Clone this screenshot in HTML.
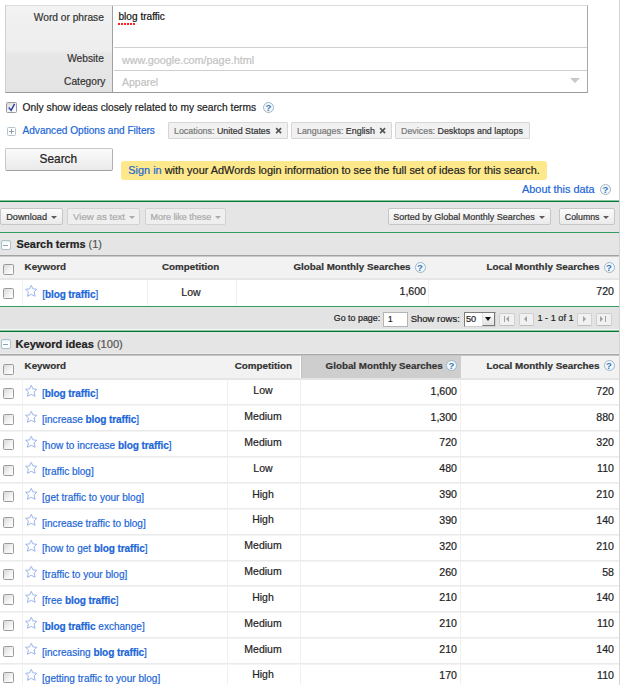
<!DOCTYPE html>
<html><head><meta charset="utf-8">
<style>
*{box-sizing:border-box;margin:0;padding:0}
html,body{width:620px;height:685px;overflow:hidden;background:#fff}
body{position:relative;font-family:"Liberation Sans",sans-serif;color:#222;-webkit-text-stroke:0.2px currentColor}
.a{position:absolute;white-space:nowrap}
.t{position:absolute;white-space:nowrap;line-height:1}
.rline{position:absolute;left:619px;top:0;width:1px;height:685px;background:#d4d4d4}
/* form */
#form{position:absolute;left:5px;top:5px;width:583px;height:88px;border:1px solid #cfcfcf;border-top-color:#dcdcdc;border-bottom-color:#9a9a9a;border-right-color:#a8a8a8;background:#fff}
#lab{position:absolute;left:0;top:0;width:107px;height:86px;background:linear-gradient(#f3f3f3 0px,#f0f0f0 14px,#eeeeee 44px,#e7e7e7 48px,#e4e4e4 86px);border-right:1px solid #a0a0a0}
.hl{position:absolute;height:1px;background:#cfcfcf}
.cb{position:absolute;width:11px;height:11px;border:1px solid #9a9a9a;border-radius:1.5px;background:linear-gradient(135deg,#d6d9dd,#f4f4f4 60%,#fff)}
.help{position:absolute;width:11px;height:11px;border:1px solid #9db6c6;border-radius:50%;background:#f2f8fc;color:#3a76b8;font-size:9.5px;font-weight:bold;line-height:9.5px;text-align:center;-webkit-text-stroke:0}
.chip{position:absolute;height:17px;top:122px;border:1px solid #d6d6d6;background:#f1f1f1;border-radius:1px;font-size:8.9px;line-height:16.5px;color:#777;padding-left:5px}
.chip b{font-weight:normal;color:#333}
.chip i{font-style:normal;color:#444;font-weight:bold;position:absolute;font-size:10px}
.btn{position:absolute;border:1px solid #c6c6c6;border-radius:2px;background:linear-gradient(#fbfbfb,#eaeaea);color:#333}
.arr{position:absolute;width:0;height:0;border-left:3px solid transparent;border-right:3px solid transparent;border-top:3.5px solid #5c5c5c}
.green{position:absolute;left:0;width:619px;height:1px;background:#067a33}
.green2{position:absolute;left:0;width:619px;height:1px;background:#8cc5a3}
.bar{position:absolute;left:0;width:619px;background:#e5e5e5}
.minus{position:absolute;width:10px;height:10px;border:1px solid #a9c2cc;border-radius:2px;background:linear-gradient(#e6f0f2,#fff 40%,#fff)}
.minus:after{content:"";position:absolute;left:1.2px;top:4px;width:5px;height:1px;background:#8aa3b3}
.star{position:absolute}
.vd{position:absolute;width:1px;background:#f0f0f0}
.hd{position:absolute;height:1px;background:#e4e4e4}
.hb{font-weight:bold;color:#333;font-size:9.8px}
.kw{color:#1b66d8;font-size:10.05px}
.kw b{font-weight:bold;letter-spacing:-0.1px}
.num{font-size:10.6px;color:#222;text-align:right}
.cmp{font-size:10.5px;color:#222;text-align:center}
.row{position:absolute;left:0;width:619px;height:25.84px;border-bottom:1px solid #ebebeb;box-shadow:0 1px 0 #f3f3f3}
.pbtn{position:absolute;top:312.5px;width:15.5px;height:13px;border:1px solid #cfcfcf;border-bottom-color:#bdbdbd;background:#f1f1f1;border-radius:2px}
</style></head><body>
<div class="rline"></div>

<!-- search form -->
<div id="form">
  <div id="lab"></div>
  <div class="hl" style="left:108px;top:41px;width:473px"></div>
  <div class="hl" style="left:108px;top:64px;width:473px"></div>
</div>
<div class="t" style="left:33.8px;top:13px;font-size:10.2px;color:#333">Word or phrase</div>
<div class="t" style="left:67.2px;top:53.5px;font-size:10.2px;color:#333">Website</div>
<div class="t" style="left:64.1px;top:76.5px;font-size:10.2px;color:#333">Category</div>
<div class="t" style="left:118.5px;top:11.5px;font-size:10.1px;color:#111">blog traffic</div>
<div class="a" style="left:118px;top:23px;width:17px;height:2px;background:repeating-linear-gradient(90deg,#f22 0,#f22 2px,transparent 2px,transparent 3px)"></div>
<div class="t" style="left:122px;top:55px;font-size:10.8px;color:#c2c2c2">www.google.com/page.html</div>
<div class="t" style="left:122px;top:77px;font-size:10.5px;color:#c2c2c2">Apparel</div>
<div class="arr" style="left:569.5px;top:78px;border-left-width:5.5px;border-right-width:5.5px;border-top:5.5px solid #c8c8c8"></div>

<!-- checkbox row -->
<div class="cb" style="left:6px;top:102px"></div>
<svg class="a" style="left:7px;top:102px" width="10" height="10" viewBox="0 0 10 10"><path d="M1.8 5.6 L4.1 8.4 L7.6 1.8" stroke="#3445a6" stroke-width="1.5" fill="none"/></svg>
<div class="t" style="left:22.6px;top:103px;font-size:10.26px;color:#222">Only show ideas closely related to my search terms</div>
<div class="help" style="left:263px;top:101.8px">?</div>

<!-- advanced -->
<div class="a" style="left:7px;top:127px;width:9px;height:9px;border:1px solid #b3c4ce;border-radius:1.5px;background:#fff"></div>
<div class="a" style="left:9px;top:131px;width:5px;height:1px;background:#8b9fae"></div>
<div class="a" style="left:11px;top:129px;width:1px;height:5px;background:#8b9fae"></div>
<div class="t" style="left:22.5px;top:126.3px;font-size:10.1px;color:#1b66d8">Advanced Options and Filters</div>
<div class="chip" style="left:168px;width:120px">Locations: <b>United States</b></div><svg class="a" style="left:274.2px;top:125.8px" width="9" height="9" viewBox="0 0 9 9"><path d="M2.1 2.1L7.1 7.1M7.1 2.1L2.1 7.1" stroke="#555" stroke-width="1.6"/></svg>
<div class="chip" style="left:291px;width:101px">Languages: <b>English</b></div><svg class="a" style="left:378.4px;top:125.8px" width="9" height="9" viewBox="0 0 9 9"><path d="M2.1 2.1L7.1 7.1M7.1 2.1L2.1 7.1" stroke="#555" stroke-width="1.6"/></svg>
<div class="chip" style="left:395px;width:135px">Devices: <b>Desktops and laptops</b></div>

<!-- search button -->
<div class="btn" style="left:5px;top:148px;width:108px;height:22.5px;border-color:#c8c8c8 #b0b0b0 #a0a0a0 #c8c8c8"></div>
<div class="t" style="left:39.5px;top:154.4px;font-size:11.9px;color:#222">Search</div>

<!-- banner -->
<div class="a" style="left:121px;top:161px;width:426px;height:19px;background:#fde98c;border-radius:3px"></div>
<div class="t" style="left:128.3px;top:165px;font-size:10.92px;color:#222"><span style="color:#2466d2">Sign in</span> with your AdWords login information to see the full set of ideas for this search.</div>
<div class="t" style="left:522px;top:184px;font-size:10.9px;color:#1b66d8">About this data</div>
<div class="help" style="left:600px;top:184px">?</div>

<!-- toolbar -->
<div class="green2" style="top:200px"></div>
<div class="green" style="top:201px"></div>
<div class="bar" style="top:202px;height:30px"></div>
<div class="green" style="top:232px;background:#349b61"></div>
<div class="btn" style="left:0px;top:208px;width:63px;height:17px"></div>
<div class="t" style="left:6.2px;top:212.5px;font-size:9.2px;color:#333">Download</div>
<div class="arr" style="left:51.3px;top:215.5px"></div>
<div class="btn" style="left:67px;top:208px;width:73px;height:17px;background:#efefef;border-color:#d2d2d2"></div>
<div class="t" style="left:73px;top:211.8px;font-size:9.7px;color:#aaa">View as text</div>
<div class="arr" style="left:129.2px;top:215.5px;border-top-color:#aaa"></div>
<div class="btn" style="left:145px;top:208px;width:81px;height:17px;background:#efefef;border-color:#d2d2d2"></div>
<div class="t" style="left:150.5px;top:212.5px;font-size:8.96px;color:#aaa">More like these</div>
<div class="arr" style="left:214.5px;top:215.5px;border-top-color:#aaa"></div>
<div class="btn" style="left:388px;top:208px;width:163px;height:17px"></div>
<div class="t" style="left:393.2px;top:212.5px;font-size:9px;color:#333">Sorted by Global Monthly Searches</div>
<div class="arr" style="left:538.7px;top:215.5px"></div>
<div class="btn" style="left:559px;top:208px;width:56px;height:17px"></div>
<div class="t" style="left:564.8px;top:212.5px;font-size:8.8px;color:#333">Columns</div>
<div class="arr" style="left:602.7px;top:215.5px"></div>

<!-- search terms section -->
<div class="bar" style="top:233px;height:22px"></div>
<div class="minus" style="left:1px;top:240px"></div>
<div class="t" style="left:16.5px;top:239.2px;font-size:10.9px;color:#222"><b>Search terms</b> <span style="color:#555">(1)</span></div>
<div class="a" style="left:0;top:255px;width:619px;height:1px;background:#a2a2a2"></div>
<div class="a" style="left:0;top:256px;width:619px;height:23px;background:#f2f2f2;border-top:1px solid #cacaca"></div>
<div class="hd" style="left:0;top:278px;width:619px;height:2px;background:#e6e6e6"></div>
<div class="cb" style="left:3px;top:264px"></div>
<div class="t hb" style="left:24.6px;top:261.8px">Keyword</div>
<div class="t hb" style="left:162px;top:261.8px">Competition</div>
<div class="t hb" style="left:293.5px;top:261.8px">Global Monthly Searches</div>
<div class="help" style="left:414.5px;top:261.5px">?</div>
<div class="t hb" style="left:486.5px;top:261.8px;font-size:9.9px">Local Monthly Searches</div>
<div class="help" style="left:603.5px;top:261.5px">?</div>
<div class="vd" style="left:22px;top:280px;height:26px"></div>
<div class="vd" style="left:147px;top:280px;height:26px"></div>
<div class="vd" style="left:236px;top:280px;height:26px"></div>
<div class="vd" style="left:428px;top:280px;height:26px"></div>
<div class="cb" style="left:3px;top:288px"></div>
<svg class="star" style="left:22px;top:282px" width="18" height="18" viewBox="0 0 18 18"><path d="M9.25 3.3 L10.9 6.9 L14.9 7.3 L12.1 9.9 L13.1 14.3 L9.25 12.3 L5.4 14.3 L6.4 9.9 L3.6 7.3 L7.6 6.9 Z" fill="none" stroke="#9cb6ec" stroke-width="1" stroke-linejoin="round"/></svg>
<div class="t kw" style="left:42.2px;top:289.5px;font-size:10px">[<b>blog traffic</b>]</div>
<div class="t cmp" style="left:147px;width:88px;top:286.5px">Low</div>
<div class="t num" style="left:237px;width:189px;top:286.3px">1,600</div>
<div class="t num" style="left:420px;width:194px;top:286.3px">720</div>

<!-- pager -->
<div class="green" style="top:306px;background:#349b61"></div>
<div class="bar" style="top:307px;height:23px;background:#e3e3e3"></div>
<div class="a" style="left:0;top:329px;width:619px;height:1px;background:#f6f6f6"></div>
<div class="green2" style="top:330px"></div>
<div class="green" style="top:331px"></div>
<div class="t" style="left:333.8px;top:314px;font-size:8.9px;color:#222">Go to page:</div>
<div class="a" style="left:383px;top:311.5px;width:25px;height:15px;background:#fff;border:1px solid #b4b4b4;font-size:8.3px;line-height:13px;padding-left:4px;color:#222">1</div>
<div class="t" style="left:410.7px;top:314px;font-size:9.5px;color:#222">Show rows:</div>
<div class="a" style="left:463.5px;top:311.5px;width:32px;height:15px;background:#fff;border:1px solid #d0d0d0;border-left-color:#7c7c7c;border-top-color:#7c7c7c;font-size:9.2px;line-height:12.5px;padding-left:1.5px;color:#222">50</div>
<div class="a" style="left:481.5px;top:312.5px;width:13px;height:13px;background:linear-gradient(#fbfbfb,#e2e2e2);border-left:1px solid #e4e4e4;border-right:1px solid #7a7a7a;border-bottom:1px solid #7a7a7a"></div>
<div class="arr" style="left:485px;top:317px;border-left-width:3.5px;border-right-width:3.5px;border-top:4px solid #111"></div>
<div class="pbtn" style="left:499px"></div>
<div class="a" style="left:503.5px;top:316px;width:1.3px;height:6px;background:#a0a0a0"></div>
<div class="a" style="left:506.3px;top:316px;width:0;height:0;border-top:3px solid transparent;border-bottom:3px solid transparent;border-right:3.5px solid #a0a0a0"></div>
<div class="pbtn" style="left:518.5px"></div>
<div class="a" style="left:523.5px;top:316px;width:0;height:0;border-top:3px solid transparent;border-bottom:3px solid transparent;border-right:3.5px solid #a0a0a0"></div>
<div class="t" style="left:537.4px;top:314px;font-size:9.2px;color:#222">1 - 1 of 1</div>
<div class="pbtn" style="left:576.5px"></div>
<div class="a" style="left:583px;top:316px;width:0;height:0;border-top:3px solid transparent;border-bottom:3px solid transparent;border-left:3.5px solid #a0a0a0"></div>
<div class="pbtn" style="left:596px"></div>
<div class="a" style="left:600px;top:316px;width:0;height:0;border-top:3px solid transparent;border-bottom:3px solid transparent;border-left:3.5px solid #a0a0a0"></div>
<div class="a" style="left:605px;top:316px;width:1.3px;height:6px;background:#a0a0a0"></div>

<!-- keyword ideas section -->
<div class="bar" style="top:332px;height:22px"></div>
<div class="minus" style="left:1px;top:339px"></div>
<div class="t" style="left:15.5px;top:338.7px;font-size:11.1px;color:#222"><b>Keyword ideas</b> <span style="color:#555">(100)</span></div>
<div class="a" style="left:0;top:353px;width:619px;height:1px;background:#efefef"></div>
<div class="a" style="left:0;top:354px;width:619px;height:1px;background:#a6a6a6"></div>
<div class="a" style="left:0;top:355px;width:619px;height:1px;background:#c6c6c6"></div>
<div class="a" style="left:0;top:356px;width:619px;height:23px;background:#f2f2f2"></div>
<div class="a" style="left:300px;top:356px;width:1px;height:23px;background:#fff"></div>
<div class="a" style="left:301px;top:356px;width:160px;height:23px;background:#cecece;border-left:1px solid #c2c2c2"></div>
<div class="hd" style="left:0;top:378px;width:619px;height:2px;background:#e5e5e5"></div>
<div class="cb" style="left:3px;top:363.5px"></div>
<div class="t hb" style="left:24.6px;top:361px">Keyword</div>
<div class="t hb" style="left:234.8px;top:361px">Competition</div>
<div class="t hb" style="left:325.6px;top:361px">Global Monthly Searches</div>
<div class="help" style="left:446px;top:360px">?</div>
<div class="t hb" style="left:486.5px;top:361px;font-size:9.9px">Local Monthly Searches</div>
<div class="help" style="left:603.5px;top:360px">?</div>

<div class="vd" style="left:22px;top:379px;height:306px"></div>
<div class="vd" style="left:227px;top:379px;height:306px"></div>
<div class="vd" style="left:300px;top:379px;height:306px"></div>
<div class="vd" style="left:460px;top:379px;height:306px"></div>
<div id="rows"><div class="row" style="top:379.66px"><div class="cb" style="left:3px;top:8px"></div><svg class="star" style="left:22px;top:2px" width="18" height="18" viewBox="0 0 18 18"><path d="M9.25 3.3 L10.9 6.9 L14.9 7.3 L12.1 9.9 L13.1 14.3 L9.25 12.3 L5.4 14.3 L6.4 9.9 L3.6 7.3 L7.6 6.9 Z" fill="none" stroke="#9cb6ec" stroke-width="1" stroke-linejoin="round"/></svg><div class="t kw" style="left:42px;top:9.8px">[<b>blog traffic</b>]</div><div class="t cmp" style="left:226.5px;width:73px;top:5.5px">Low</div><div class="t num" style="left:301px;width:156px;top:6px">1,600</div><div class="t num" style="left:461px;width:153px;top:6px">720</div></div>
<div class="row" style="top:405.50px"><div class="cb" style="left:3px;top:8px"></div><svg class="star" style="left:22px;top:2px" width="18" height="18" viewBox="0 0 18 18"><path d="M9.25 3.3 L10.9 6.9 L14.9 7.3 L12.1 9.9 L13.1 14.3 L9.25 12.3 L5.4 14.3 L6.4 9.9 L3.6 7.3 L7.6 6.9 Z" fill="none" stroke="#9cb6ec" stroke-width="1" stroke-linejoin="round"/></svg><div class="t kw" style="left:42px;top:9.8px">[increase <b>blog traffic</b>]</div><div class="t cmp" style="left:226.5px;width:73px;top:5.5px">Medium</div><div class="t num" style="left:301px;width:156px;top:6px">1,300</div><div class="t num" style="left:461px;width:153px;top:6px">880</div></div>
<div class="row" style="top:431.34px"><div class="cb" style="left:3px;top:8px"></div><svg class="star" style="left:22px;top:2px" width="18" height="18" viewBox="0 0 18 18"><path d="M9.25 3.3 L10.9 6.9 L14.9 7.3 L12.1 9.9 L13.1 14.3 L9.25 12.3 L5.4 14.3 L6.4 9.9 L3.6 7.3 L7.6 6.9 Z" fill="none" stroke="#9cb6ec" stroke-width="1" stroke-linejoin="round"/></svg><div class="t kw" style="left:42px;top:9.8px">[how to increase <b>blog traffic</b>]</div><div class="t cmp" style="left:226.5px;width:73px;top:5.5px">Medium</div><div class="t num" style="left:301px;width:156px;top:6px">720</div><div class="t num" style="left:461px;width:153px;top:6px">320</div></div>
<div class="row" style="top:457.18px"><div class="cb" style="left:3px;top:8px"></div><svg class="star" style="left:22px;top:2px" width="18" height="18" viewBox="0 0 18 18"><path d="M9.25 3.3 L10.9 6.9 L14.9 7.3 L12.1 9.9 L13.1 14.3 L9.25 12.3 L5.4 14.3 L6.4 9.9 L3.6 7.3 L7.6 6.9 Z" fill="none" stroke="#9cb6ec" stroke-width="1" stroke-linejoin="round"/></svg><div class="t kw" style="left:42px;top:9.8px">[traffic blog]</div><div class="t cmp" style="left:226.5px;width:73px;top:5.5px">Low</div><div class="t num" style="left:301px;width:156px;top:6px">480</div><div class="t num" style="left:461px;width:153px;top:6px">110</div></div>
<div class="row" style="top:483.02px"><div class="cb" style="left:3px;top:8px"></div><svg class="star" style="left:22px;top:2px" width="18" height="18" viewBox="0 0 18 18"><path d="M9.25 3.3 L10.9 6.9 L14.9 7.3 L12.1 9.9 L13.1 14.3 L9.25 12.3 L5.4 14.3 L6.4 9.9 L3.6 7.3 L7.6 6.9 Z" fill="none" stroke="#9cb6ec" stroke-width="1" stroke-linejoin="round"/></svg><div class="t kw" style="left:42px;top:9.8px">[get traffic to your blog]</div><div class="t cmp" style="left:226.5px;width:73px;top:5.5px">High</div><div class="t num" style="left:301px;width:156px;top:6px">390</div><div class="t num" style="left:461px;width:153px;top:6px">210</div></div>
<div class="row" style="top:508.86px"><div class="cb" style="left:3px;top:8px"></div><svg class="star" style="left:22px;top:2px" width="18" height="18" viewBox="0 0 18 18"><path d="M9.25 3.3 L10.9 6.9 L14.9 7.3 L12.1 9.9 L13.1 14.3 L9.25 12.3 L5.4 14.3 L6.4 9.9 L3.6 7.3 L7.6 6.9 Z" fill="none" stroke="#9cb6ec" stroke-width="1" stroke-linejoin="round"/></svg><div class="t kw" style="left:42px;top:9.8px">[increase traffic to blog]</div><div class="t cmp" style="left:226.5px;width:73px;top:5.5px">High</div><div class="t num" style="left:301px;width:156px;top:6px">390</div><div class="t num" style="left:461px;width:153px;top:6px">140</div></div>
<div class="row" style="top:534.70px"><div class="cb" style="left:3px;top:8px"></div><svg class="star" style="left:22px;top:2px" width="18" height="18" viewBox="0 0 18 18"><path d="M9.25 3.3 L10.9 6.9 L14.9 7.3 L12.1 9.9 L13.1 14.3 L9.25 12.3 L5.4 14.3 L6.4 9.9 L3.6 7.3 L7.6 6.9 Z" fill="none" stroke="#9cb6ec" stroke-width="1" stroke-linejoin="round"/></svg><div class="t kw" style="left:42px;top:9.8px">[how to get <b>blog traffic</b>]</div><div class="t cmp" style="left:226.5px;width:73px;top:5.5px">Medium</div><div class="t num" style="left:301px;width:156px;top:6px">320</div><div class="t num" style="left:461px;width:153px;top:6px">210</div></div>
<div class="row" style="top:560.54px"><div class="cb" style="left:3px;top:8px"></div><svg class="star" style="left:22px;top:2px" width="18" height="18" viewBox="0 0 18 18"><path d="M9.25 3.3 L10.9 6.9 L14.9 7.3 L12.1 9.9 L13.1 14.3 L9.25 12.3 L5.4 14.3 L6.4 9.9 L3.6 7.3 L7.6 6.9 Z" fill="none" stroke="#9cb6ec" stroke-width="1" stroke-linejoin="round"/></svg><div class="t kw" style="left:42px;top:9.8px">[traffic to your blog]</div><div class="t cmp" style="left:226.5px;width:73px;top:5.5px">Medium</div><div class="t num" style="left:301px;width:156px;top:6px">260</div><div class="t num" style="left:461px;width:153px;top:6px">58</div></div>
<div class="row" style="top:586.38px"><div class="cb" style="left:3px;top:8px"></div><svg class="star" style="left:22px;top:2px" width="18" height="18" viewBox="0 0 18 18"><path d="M9.25 3.3 L10.9 6.9 L14.9 7.3 L12.1 9.9 L13.1 14.3 L9.25 12.3 L5.4 14.3 L6.4 9.9 L3.6 7.3 L7.6 6.9 Z" fill="none" stroke="#9cb6ec" stroke-width="1" stroke-linejoin="round"/></svg><div class="t kw" style="left:42px;top:9.8px">[free <b>blog traffic</b>]</div><div class="t cmp" style="left:226.5px;width:73px;top:5.5px">High</div><div class="t num" style="left:301px;width:156px;top:6px">210</div><div class="t num" style="left:461px;width:153px;top:6px">140</div></div>
<div class="row" style="top:612.22px"><div class="cb" style="left:3px;top:8px"></div><svg class="star" style="left:22px;top:2px" width="18" height="18" viewBox="0 0 18 18"><path d="M9.25 3.3 L10.9 6.9 L14.9 7.3 L12.1 9.9 L13.1 14.3 L9.25 12.3 L5.4 14.3 L6.4 9.9 L3.6 7.3 L7.6 6.9 Z" fill="none" stroke="#9cb6ec" stroke-width="1" stroke-linejoin="round"/></svg><div class="t kw" style="left:42px;top:9.8px">[<b>blog traffic</b> exchange]</div><div class="t cmp" style="left:226.5px;width:73px;top:5.5px">Medium</div><div class="t num" style="left:301px;width:156px;top:6px">210</div><div class="t num" style="left:461px;width:153px;top:6px">110</div></div>
<div class="row" style="top:638.06px"><div class="cb" style="left:3px;top:8px"></div><svg class="star" style="left:22px;top:2px" width="18" height="18" viewBox="0 0 18 18"><path d="M9.25 3.3 L10.9 6.9 L14.9 7.3 L12.1 9.9 L13.1 14.3 L9.25 12.3 L5.4 14.3 L6.4 9.9 L3.6 7.3 L7.6 6.9 Z" fill="none" stroke="#9cb6ec" stroke-width="1" stroke-linejoin="round"/></svg><div class="t kw" style="left:42px;top:9.8px">[increasing <b>blog traffic</b>]</div><div class="t cmp" style="left:226.5px;width:73px;top:5.5px">Medium</div><div class="t num" style="left:301px;width:156px;top:6px">210</div><div class="t num" style="left:461px;width:153px;top:6px">140</div></div>
<div class="row" style="top:663.90px"><div class="cb" style="left:3px;top:8px"></div><svg class="star" style="left:22px;top:2px" width="18" height="18" viewBox="0 0 18 18"><path d="M9.25 3.3 L10.9 6.9 L14.9 7.3 L12.1 9.9 L13.1 14.3 L9.25 12.3 L5.4 14.3 L6.4 9.9 L3.6 7.3 L7.6 6.9 Z" fill="none" stroke="#9cb6ec" stroke-width="1" stroke-linejoin="round"/></svg><div class="t kw" style="left:42px;top:9.8px">[getting traffic to your blog]</div><div class="t cmp" style="left:226.5px;width:73px;top:5.5px">High</div><div class="t num" style="left:301px;width:156px;top:6px">170</div><div class="t num" style="left:461px;width:153px;top:6px">110</div></div></div>
</body></html>
